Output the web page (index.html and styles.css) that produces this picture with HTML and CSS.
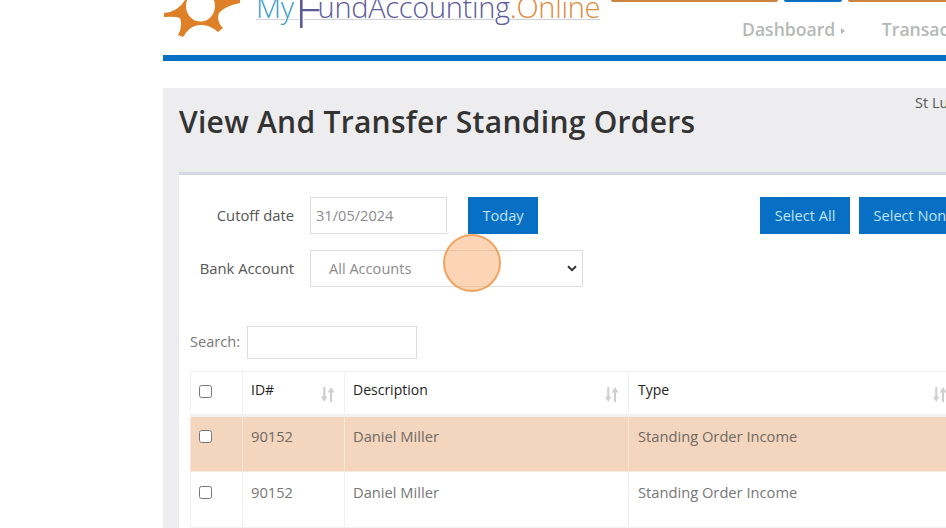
FILE: index.html

```html
<!DOCTYPE html>
<html lang="en">
<head>
    <meta charset="UTF-8">
    <meta name="viewport" content="width=device-width, initial-scale=1.0">
    <title>View And Transfer Standing Orders</title>
    <link rel="stylesheet" href="styles.css">
</head>
<body>
    <div class="page">
        <header class="site-header">
            <div class="logo">
                <svg class="logo-sun" width="80" height="40" viewBox="0 0 80 40">
                    <path fill-rule="evenodd" fill="#dd8027" d="M1 13 Q15 12 22 0 L77 0 L77 3 Q62 6 56 13 Q53 21 60 28 L55 32 Q46 24 37 25 Q27 25 20 37 L15 35 Q20 26 17 18 Q11 16 1 17 Z M23 6 a14.5 15.5 0 1 0 29 0 a14.5 15.5 0 1 0 -29 0 Z"/>
                </svg>
                <div class="logo-text">
                    <span class="logo-my">My</span><span class="logo-f">F</span><span class="logo-fund">undAccounting</span><span class="logo-online">.Online</span>
                </div>
            </div>
            <div class="header-right">
                <div class="top-buttons">
                    <span class="top-btn orange wide"></span>
                    <span class="top-btn blue"></span>
                    <span class="top-btn orange rest"></span>
                </div>
                <nav class="main-nav">
                    <a class="nav-item">Dashboard <span class="nav-arrow"></span></a>
                    <a class="nav-item">Transactions</a>
                </nav>
            </div>
        </header>

        <main class="panel">
            <div class="panel-head">
                <h1>View And Transfer Standing Orders</h1>
                <span class="org-name">St Luke's Church</span>
            </div>

            <section class="card">
                <div class="form-top">
                    <div class="form-rows">
                        <div class="form-row">
                            <label class="form-label" for="cutoff">Cutoff date</label>
                            <input class="date-input" type="text" id="cutoff" value="31/05/2024">
                            <button class="btn today-btn" type="button">Today</button>
                        </div>
                        <div class="form-row">
                            <label class="form-label" for="bank">Bank Account</label>
                            <select class="bank-select" id="bank">
                                <option>All Accounts</option>
                            </select>
                        </div>
                    </div>
                    <div class="select-btns">
                        <button class="btn select-all" type="button">Select All</button>
                        <button class="btn select-none" type="button">Select None</button>
                    </div>
                </div>

                <div class="search-row">
                    <label for="search">Search:</label>
                    <input type="text" id="search">
                </div>

                <table class="orders">
                    <thead>
                        <tr>
                            <th class="col-check"><input type="checkbox"></th>
                            <th class="col-id">ID#<svg class="sort" width="14" height="15" viewBox="0 0 14 15"><path d="M2.2 0h2.2v9.5h2L3.3 15 0 9.5h2.2z M8.9 15h2.2V5.5h2.4L10 0 6.7 5.5h2.2z" fill="#cfcfcf"/></svg></th>
                            <th class="col-desc">Description<svg class="sort" width="14" height="15" viewBox="0 0 14 15"><path d="M2.2 0h2.2v9.5h2L3.3 15 0 9.5h2.2z M8.9 15h2.2V5.5h2.4L10 0 6.7 5.5h2.2z" fill="#cfcfcf"/></svg></th>
                            <th class="col-type">Type<svg class="sort" width="14" height="15" viewBox="0 0 14 15"><path d="M2.2 0h2.2v9.5h2L3.3 15 0 9.5h2.2z M8.9 15h2.2V5.5h2.4L10 0 6.7 5.5h2.2z" fill="#cfcfcf"/></svg></th>
                        </tr>
                    </thead>
                    <tbody>
                        <tr class="selected">
                            <td><input type="checkbox"></td>
                            <td>90152</td>
                            <td>Daniel Miller</td>
                            <td>Standing Order Income</td>
                        </tr>
                        <tr>
                            <td><input type="checkbox"></td>
                            <td>90152</td>
                            <td>Daniel Miller</td>
                            <td>Standing Order Income</td>
                        </tr>
                    </tbody>
                </table>
            </section>
        </main>
    </div>
    <div class="click-marker"></div>
</body>
</html>
```

FILE: styles.css

```css
html, body {
    height: 100%;
}
body {
    margin: 0;
    background-color: #fff;
    font-family: "Open Sans", Arial, sans-serif;
    font-size: 14.8px;
    color: #555;
    overflow: hidden;
    position: relative;
}
.page {
    margin-left: 163px;
    width: 1100px;
}
.site-header {
    height: 55px;
    border-bottom: 6px solid #0870c4;
    display: flex;
    overflow: hidden;
}
.logo {
    width: 448px;
    display: flex;
}
.logo-text {
    margin: -13px 0 0 13px;
    font-weight: 300;
    font-size: 29px;
    line-height: 40px;
    letter-spacing: -0.3px;
    white-space: nowrap;
    color: #cfd2da;
    text-decoration: underline 1px;
    text-underline-offset: 1px;
}
.logo-my { color: #3a9cc9; }
.logo-f {
    color: #5d5a9b;
    font-size: 52px;
    line-height: 20px;
    vertical-align: -10px;
    margin: 0 -3px 0 1px;
}
.logo-fund { color: #5d5a9b; }
.logo-online { color: #e08a3c; }
.header-right {
    flex: 1;
}
.top-buttons {
    display: flex;
    gap: 6px;
    height: 2px;
}
.top-btn {
    border-radius: 0 0 4px 4px;
}
.top-btn.orange { background-color: #cc843f; }
.top-btn.blue { background-color: #0870c4; width: 58px; }
.top-btn.wide { width: 167px; }
.top-btn.rest { width: 200px; }
.main-nav {
    display: flex;
    gap: 37px;
    margin: 17px 0 0 131px;
}
.nav-item {
    font-size: 17.6px;
    font-weight: 600;
    line-height: 20px;
    color: #b5b9b6;
    white-space: nowrap;
}
.nav-arrow {
    display: inline-block;
    border-left: 4px solid #b5b9b6;
    border-top: 3.5px solid transparent;
    border-bottom: 3.5px solid transparent;
    margin-left: 1px;
    vertical-align: 2px;
}
.panel {
    margin-top: 27px;
    background-color: #edecee;
    padding: 0 0 0 16px;
    height: 440px;
}
.panel-head {
    height: 84px;
    display: flex;
}
.panel-head h1 {
    margin: 0;
    padding-top: 13px;
    width: 736px;
    font-size: 30px;
    font-weight: 600;
    line-height: 41px;
    letter-spacing: 0.28px;
    color: #333;
    white-space: nowrap;
}
.org-name {
    padding-top: 5px;
    font-size: 14.5px;
    white-space: nowrap;
}
.card {
    background-color: #fff;
    border-top: 3px solid #d5d8e0;
    padding: 22px 0 0 11px;
    height: 400px;
}
.form-top {
    display: flex;
    height: 129px;
}
.form-rows {
    width: 570px;
    display: flex;
    flex-direction: column;
    gap: 16px;
}
.form-row {
    display: flex;
    align-items: center;
    height: 37px;
}
.form-label {
    width: 104px;
    padding-bottom: 2px;
    text-align: right;
    margin-right: 16px;
    color: #555;
    white-space: nowrap;
}
.date-input,
.bank-select,
.search-row input {
    box-sizing: border-box;
    border: 1px solid #ddd;
    background-color: #fff;
    font-family: inherit;
    font-size: 14.6px;
    color: #8c8c8c;
    outline: none;
}
.date-input {
    width: 137px;
    height: 37px;
    padding: 0 5px 2px;
}
.bank-select {
    width: 273px;
    height: 37px;
    padding: 0 32px 2px 18px;
    appearance: none;
    background-image: url("data:image/svg+xml,%3Csvg xmlns='http://www.w3.org/2000/svg' width='10' height='7' viewBox='0 0 10 7'%3E%3Cpath d='M1 1.2l4 4 4-4' fill='none' stroke='%23333' stroke-width='2'/%3E%3C/svg%3E");
    background-repeat: no-repeat;
    background-position: right 5px center;
}
.btn {
    height: 37px;
    border: none;
    background-color: #0870c4;
    color: #bfe3f7;
    font-family: inherit;
    font-size: 14.6px;
    padding: 0 0 2px;
}
.today-btn {
    width: 70px;
    margin-left: 21px;
}
.select-btns {
    display: flex;
    gap: 9px;
}
.select-all { width: 90px; }
.select-none { width: 110px; white-space: nowrap; }
.search-row {
    display: flex;
    align-items: center;
    height: 33px;
    gap: 7px;
    margin-bottom: 12px;
    font-size: 14.6px;
    color: #777;
}
.search-row label {
    padding-bottom: 3px;
}
.search-row input {
    width: 170px;
    height: 33px;
}
.orders {
    border-collapse: collapse;
    table-layout: fixed;
    width: 1000px;
}
.orders th,
.orders td {
    box-sizing: border-box;
    border: 1px solid #f1f1f1;
    padding: 9px 8px 0;
    text-align: left;
    vertical-align: top;
    white-space: nowrap;
}
.orders th {
    height: 44px;
    padding-top: 8px;
    font-size: 14px;
    font-weight: 400;
    color: #222;
    position: relative;
    border-bottom: 3px solid #f1f1f1;
}
.orders td {
    height: 56px;
    padding-top: 10px;
    font-size: 14.7px;
    color: #777;
}
.orders th:last-child,
.orders td:last-child {
    padding-left: 9px;
}
.orders input[type="checkbox"] {
    width: 13px;
    height: 13px;
    margin: 4px 0 0;
}
.orders th input[type="checkbox"] {
    margin-top: 5px;
}
.col-check { width: 52px; }
.col-id { width: 102px; }
.col-desc { width: 284px; }
.col-type { width: 562px; }
.selected td {
    padding-top: 9px;
    background-color: #f3d6bd;
    border-color: #f8e8da;
    color: #6f6a66;
}
.sort {
    position: absolute;
    right: 9px;
    top: 15px;
}
.col-type .sort {
    right: 243px;
}
.click-marker {
    position: absolute;
    left: 443px;
    top: 234px;
    width: 58px;
    height: 58px;
    box-sizing: border-box;
    border-radius: 50%;
    border: 2px solid rgba(240, 160, 90, 0.9);
    background-color: rgba(250, 170, 110, 0.5);
}
```
